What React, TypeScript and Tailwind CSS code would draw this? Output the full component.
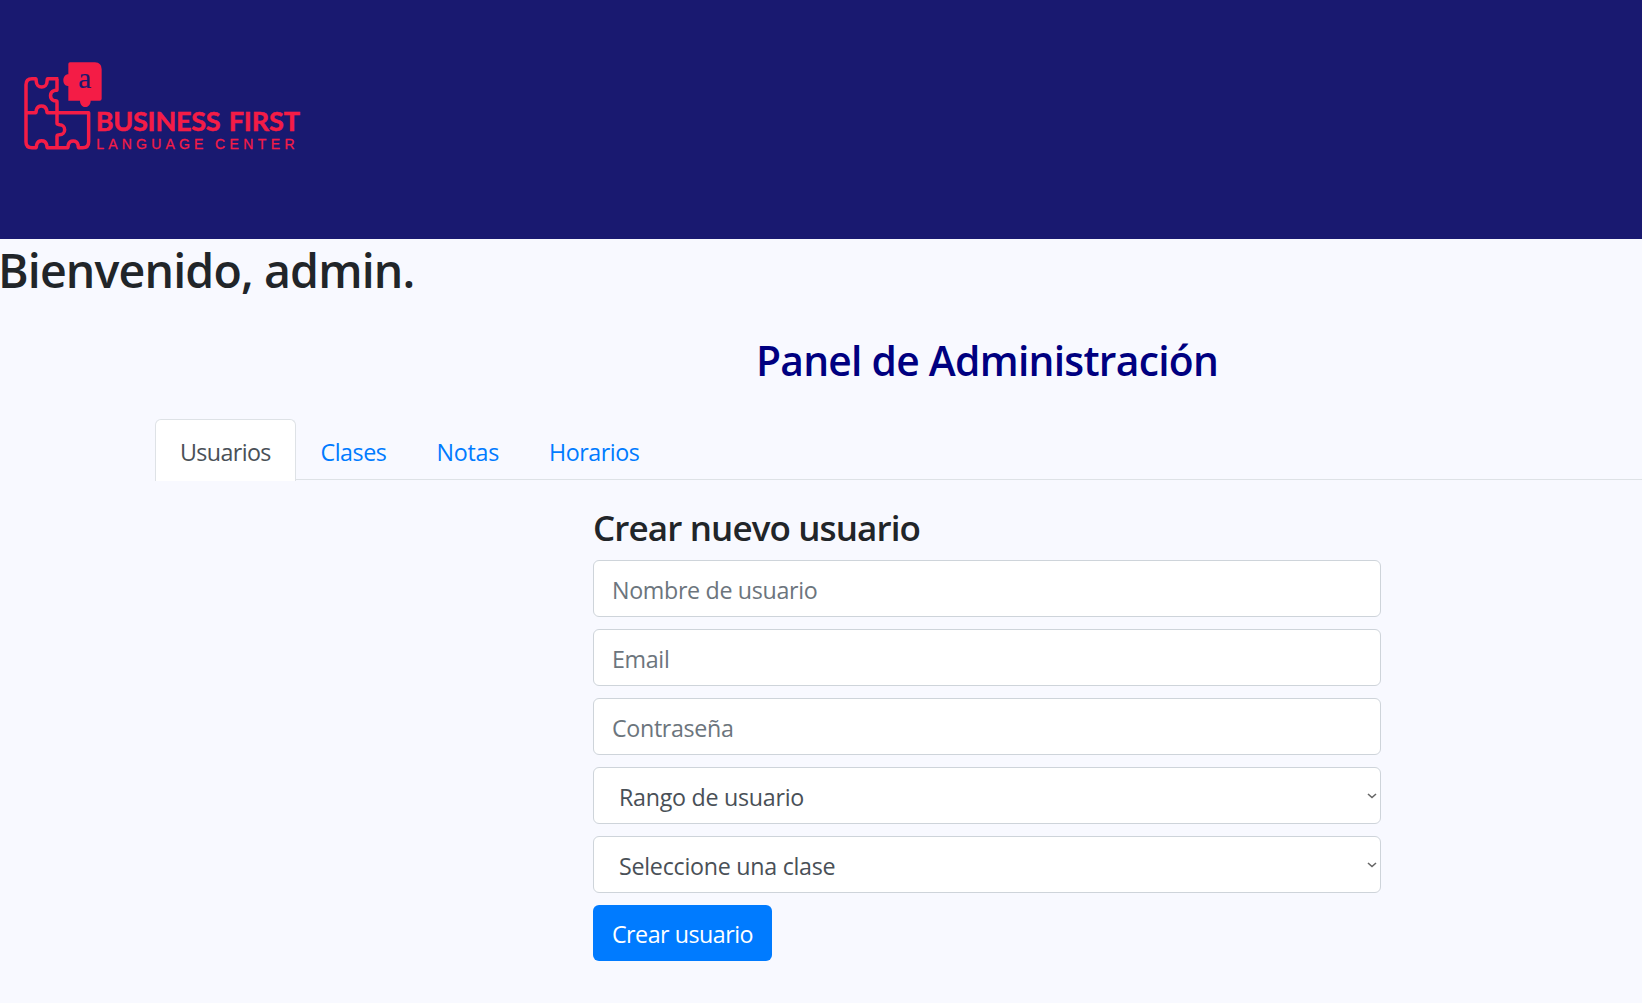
import type { ReactNode } from "react";

function Logo() {
  return (
    <svg viewBox="0 0 900 330" className="h-[110px] w-[300px]" role="img" aria-label="Business First Language Center">
      <g fill="none" stroke="#f41c46" strokeWidth="10.5" strokeLinejoin="round">
        <path d="M145 86 H113 C111 86 112 90 111 95 A16 16 0 0 1 79 95 C78 90 79 86 77 86 H66 Q48 86 48 104 V276 Q48 293 66 293 H78 C80 293 79 288 80 284 A15.500 15.500 0 0 1 110 284 C111 288 110 293 112 293 H173 C175 293 174 288 175 284 A15 15 0 0 1 204 284 C205 288 204 293 206 293 H218 Q236 293 236 275 V188 H112 C110 188 111 184 110 180 A16 16 0 0 0 79 180 C78 184 79 188 77 188 H48" />
        <path d="M141 86 V119 C141 122 137 120 132 122 A16 16 0 0 0 132 152 C137 153 141 151 141 155 V220 C141 224 144 223 149 224 A15 15 0 0 1 149 254 C144 256 141 254 141 258 V293" />
      </g>
      <path
        d="M180 37 H255 Q275 38 275 58 V146 Q275 152 269 152 H242 C242 161 237 171 226 171 S210 161 210 152 H175 V108 C166 109 160 101 160 91 S166 73 175 73 V42 Q175 37 180 37Z"
        fill="#f41c46"
      />
      <text x="205" y="115" className="fill-[#191970] font-['Liberation_Serif'] text-[86px]" stroke="#191970" strokeWidth="0.5" textLength="39" lengthAdjust="spacingAndGlyphs">
        a
      </text>
      <g className="fill-[#f41c46] font-['Lato'] text-[81px] font-bold" stroke="#f41c46" strokeWidth="1.5">
        <text x="257" y="241.5" textLength="375">BUSINESS</text>
        <text x="656" y="241.5" textLength="214">FIRST</text>
      </g>
      <g className="fill-[#f41c46] font-['Liberation_Sans'] text-[42px]" stroke="#f41c46" strokeWidth="0.8">
        <text x="259" y="298" textLength="321">LANGUAGE</text>
        <text x="615" y="298" textLength="239">CENTER</text>
      </g>
    </svg>
  );
}

function Header() {
  return (
    <header className="h-[239px] bg-[#191970] px-[10px] pt-[50px]">
      <Logo />
    </header>
  );
}

function Tabs() {
  return (
    <nav className="flex h-[61px] border-b border-[#dee2e6] text-[23.25px] leading-9 text-[#007bff]">
      <a className="-mb-[2px] h-[62px] w-[141px] rounded-t-[6px] border border-b-0 border-[#dee2e6] bg-white pt-[14px] pl-[24px] tracking-[-0.6px] text-[#495057]">
        Usuarios
      </a>
      <a className="w-[116px] pt-[15px] pl-[24.5px] tracking-[-0.45px]">Clases</a>
      <a className="w-[113px] pt-[15px] pl-[24.5px] tracking-[-0.25px]">Notas</a>
      <a className="pt-[15px] pl-6 tracking-[-0.45px]">Horarios</a>
    </nav>
  );
}

const control =
  "block h-[57px] w-full rounded-[6px] border border-[#ced4da] bg-white text-[23.25px] leading-9 outline-none";

function TextField({ placeholder, type = "text" }: { placeholder: string; type?: string }) {
  return (
    <input
      type={type}
      placeholder={placeholder}
      className={`${control} px-[18px] pt-[2px] tracking-[-0.33px] placeholder:text-[#6c757d]`}
    />
  );
}

function SelectField({ children }: { children: ReactNode }) {
  return (
    <div className={`${control} flex items-center justify-between pr-[3px] pl-[25px] tracking-[-0.27px] text-[#495057]`}>
      <span className="pt-[2px]">{children}</span>
      <svg viewBox="0 0 10 6" className="h-[6px] w-[10px]" fill="none" stroke="#666" strokeWidth="1.6">
        <path d="M1 1 L5 4.500 L9 1" />
      </svg>
    </div>
  );
}

export default function App() {
  return (
    <div className="h-[1003px] w-full overflow-hidden bg-[#f8f9ff] font-['Open_Sans','Noto_Sans',sans-serif] text-[#212529]">
      <Header />
      <h1 className="h-[81px] pt-[2px] indent-[-2px] text-[46.5px] leading-[58px] font-semibold tracking-[-0.85px]">Bienvenido, admin.</h1>
      <main className="ml-[155px] w-[1664px]">
        <h2 className="h-[99px] pt-[15px] text-center text-[40.75px] leading-[50px] font-semibold tracking-[-0.72px] text-[#000080]">
          Panel de Administración
        </h2>
        <Tabs />
        <form className="mx-auto flex w-[788px] flex-col gap-3 pt-6">
          <h3 className="-mb-[2px] h-[46px] pt-[2px] text-[35px] leading-[43px] font-semibold tracking-[-0.88px]">Crear nuevo usuario</h3>
          <TextField placeholder="Nombre de usuario" />
          <TextField placeholder="Email" type="email" />
          <TextField placeholder="Contraseña" type="password" />
          <SelectField>Rango de usuario</SelectField>
          <SelectField>Seleccione una clase</SelectField>
          <button type="button" className="h-[56px] w-[179px] rounded-[6px] bg-[#007bff] pt-[2px] text-[23.25px] tracking-[-0.5px] text-white">
            Crear usuario
          </button>
        </form>
      </main>
    </div>
  );
}
